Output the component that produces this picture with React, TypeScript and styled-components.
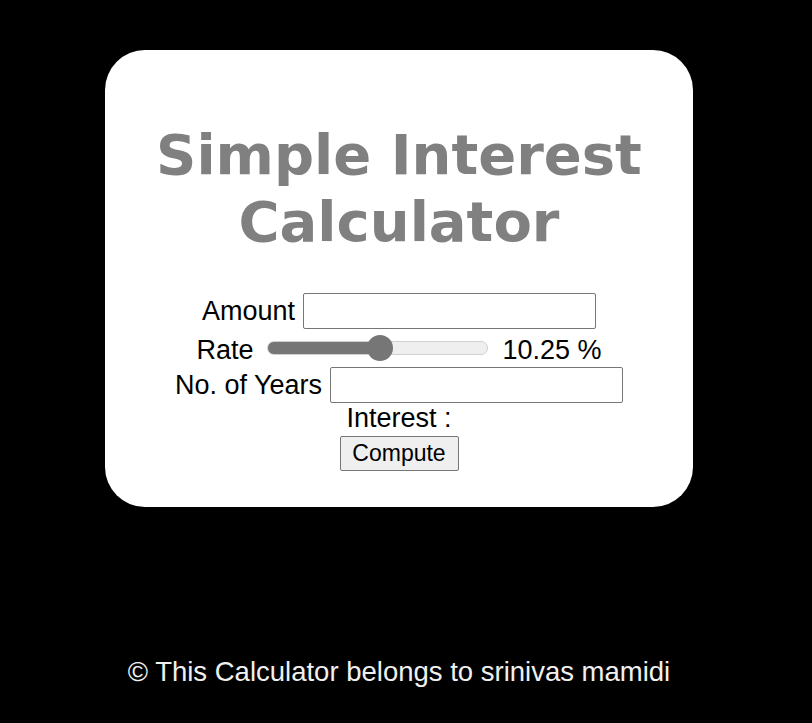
import * as React from 'react';
import styled, {createGlobalStyle} from 'styled-components';

const GlobalStyle = createGlobalStyle`
    html, body {
        margin: 0;
        padding: 0;
        background: #000;
    }

    body {
        font-family: "Liberation Sans", Arial, sans-serif;
    }
`;

const Page = styled.div`
    width: 798px;
    min-height: 723px;
    padding-top: 50px;
    box-sizing: border-box;
    display: flex;
    flex-direction: column;
    align-items: center;
`;

const Card = styled.div`
    width: 588px;
    height: 457px;
    box-sizing: border-box;
    background: #fff;
    border-radius: 40px;
    padding-top: 71px;
    display: flex;
    flex-direction: column;
    align-items: center;
`;

const Title = styled.h1`
    margin: 0 0 38px;
    font-family: "DejaVu Sans", Verdana, sans-serif;
    font-weight: bold;
    font-size: 56px;
    line-height: 67px;
    color: #808080;
    text-align: center;
`;

const Row = styled.div<{$height?: number}>`
    display: flex;
    align-items: center;
    justify-content: center;
    gap: 8px;
    height: ${(p) => (p.$height ? `${p.$height}px` : 'auto')};
    font-size: 27px;
    color: #000;
    line-height: 31px;
`;

const Label = styled.label<{$drop?: number}>`
    padding-top: ${(p) => p.$drop ?? 0}px;
`;

const TextInput = styled.input`
    width: 293px;
    height: 36px;
    box-sizing: border-box;
    border: 1px solid #767676;
    border-radius: 2px;
    font-size: 22px;
    padding: 0 4px;
    outline: none;
`;

const Slider = styled.input`
    -webkit-appearance: none;
    appearance: none;
    width: 221px;
    height: 14px;
    margin: 0 6px;
    border-radius: 7px;
    border: 1px solid #cfcfcf;
    box-sizing: border-box;
    outline: none;

    &::-webkit-slider-thumb {
        -webkit-appearance: none;
        width: 26px;
        height: 26px;
        border-radius: 50%;
        background: #767676;
        border: none;
    }
`;

const RateValue = styled.span`
    padding-top: 4px;
`;

const Result = styled.div`
    font-size: 27px;
    line-height: 31px;
    color: #000;
`;

const Button = styled.button`
    margin-top: 2px;
    width: 119px;
    height: 35px;
    padding: 0;
    font-family: "Liberation Sans", Arial, sans-serif;
    font-size: 23px;
    color: #000;
    background: #efefef;
    border: 1px solid #767676;
    border-radius: 2px;
`;

const Footer = styled.footer`
    margin-top: 149px;
    font-size: 27.5px;
    color: #f0f0f0;
`;

const MIN = 0;
const MAX = 20;

const App: React.FC = () => {
    const [amount, setAmount] = React.useState('');
    const [rate, setRate] = React.useState(10.25);
    const [years, setYears] = React.useState('');
    const [interest, setInterest] = React.useState<number | null>(null);

    const pct = ((rate - MIN) / (MAX - MIN)) * 100;

    const compute = () => {
        const p = parseFloat(amount);
        const n = parseFloat(years);
        if (!isNaN(p) && !isNaN(n)) {
            setInterest((p * n * rate) / 100);
        }
    };

    return (
        <>
            <GlobalStyle />
            <Page>
                <Card>
                    <Title>
                        Simple Interest
                        <br />
                        Calculator
                    </Title>
                    <Row>
                        <Label>Amount</Label>
                        <TextInput value={amount} onChange={(e) => setAmount(e.target.value)} />
                    </Row>
                    <Row $height={38}>
                        <Label $drop={4}>Rate</Label>
                        <Slider
                            type="range"
                            min={MIN}
                            max={MAX}
                            step={0.25}
                            value={rate}
                            onChange={(e) => setRate(parseFloat(e.target.value))}
                            style={{
                                background: `linear-gradient(to right, #767676 ${pct}%, #efefef ${pct}%)`,
                            }}
                        />
                        <RateValue>{rate} %</RateValue>
                    </Row>
                    <Row>
                        <Label>No. of Years</Label>
                        <TextInput value={years} onChange={(e) => setYears(e.target.value)} />
                    </Row>
                    <Result>Interest : {interest !== null ? interest : ''}</Result>
                    <Button onClick={compute}>Compute</Button>
                </Card>
                <Footer>© This Calculator belongs to srinivas mamidi</Footer>
            </Page>
        </>
    );
};

export default App;
